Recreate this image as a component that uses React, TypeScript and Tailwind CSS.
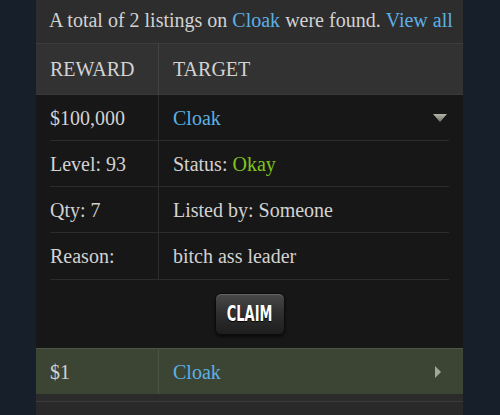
import React from "react";

const SERIF = "[font-family:'Liberation_Serif','Times_New_Roman',serif]";

function Row({ left, children, last }: { left: string; children: React.ReactNode; last?: boolean }) {
  return (
    <div className={`grid grid-cols-[108px_1fr] h-[46px] ${last ? "" : "border-b border-[#2c2c2c]"}`}>
      <div className="flex items-center">{left}</div>
      <div className="flex items-center pl-[14px] border-l border-[#2c2c2c]">{children}</div>
    </div>
  );
}

export default function App() {
  return (
    <div className={`w-[500px] h-[415px] flex bg-[#17202a] overflow-hidden text-[20px] text-[#d2d2d2] ${SERIF}`}>
      <div className="w-[36px] shrink-0" />

      <div className="w-[427px] shrink-0 flex flex-col bg-[#171717]">
        {/* summary line */}
        <div className="h-[44px] bg-[#2d2d2d] flex items-center px-[13px] pb-[4px] border-b border-[#3d3d3d] whitespace-nowrap">
          A total of 2 listings on&nbsp;<span className="text-[#5cb0e4]">Cloak</span>&nbsp;were found.&nbsp;
          <span className="text-[#5cb0e4]">View all</span>
        </div>

        {/* column headings */}
        <div className="h-[51px] bg-[#323232] px-[14px] grid grid-cols-[108px_1fr] border-b border-[#3a3a3a]">
          <div className="flex items-center">REWARD</div>
          <div className="flex items-center pl-[14px] border-l border-[#434343]">TARGET</div>
        </div>

        {/* listing details */}
        <div className="px-[14px]">
          <div className="border-b border-[#2c2c2c]">
            <Row left="$100,000">
              <span className="text-[#5cb0e4]">Cloak</span>
              <svg className="ml-auto mr-[2px]" width="14" height="8" viewBox="0 0 14 8">
                <defs>
                  <linearGradient id="dn" x1="0" y1="0" x2="0" y2="1">
                    <stop offset="0" stopColor="#b4b6a8" />
                    <stop offset="1" stopColor="#6f7166" />
                  </linearGradient>
                </defs>
                <polygon points="0,0 14,0 7,8" fill="url(#dn)" />
              </svg>
            </Row>
            <Row left="Level: 93">
              Status:&nbsp;<span className="text-[#80c41d]">Okay</span>
            </Row>
            <Row left="Qty: 7">Listed by: Someone</Row>
            <Row left="Reason:" last>
              bitch ass leader
            </Row>
          </div>
        </div>

        {/* claim */}
        <div className="h-[68px] flex items-center justify-center">
          <button className="w-[70px] h-[42px] flex items-center justify-center rounded-[6px] bg-gradient-to-b from-[#4a4a4a] via-[#2e2e2e] to-[#1e1e1e] border border-[#0c0c0c] shadow-[0_2px_3px_rgba(0,0,0,0.6),inset_0_1px_0_rgba(255,255,255,0.15)] text-white [text-shadow:0_1px_1px_#000]">
            <span className="inline-block text-[20px] font-bold scale-x-[0.72] scale-y-[1.05] [font-family:'DejaVu_Sans_Condensed','DejaVu_Sans',sans-serif]">CLAIM</span>
          </button>
        </div>

        {/* second listing */}
        <div className="h-[46px] bg-[#3c4434] border-t border-[#4d5545] px-[14px] grid grid-cols-[108px_1fr]">
          <div className="flex items-center">$1</div>
          <div className="flex items-center pl-[14px] border-l border-[#4b5343]">
            <span className="text-[#5cb0e4]">Cloak</span>
            <svg className="ml-auto mr-[8px]" width="6" height="12" viewBox="0 0 6 12">
              <polygon points="0,0 6,6 0,12" fill="#a3a596" />
            </svg>
          </div>
        </div>

        <div className="h-[8px] bg-[#2b2b2b] border-b border-[#3c3c3c]" />
        <div className="flex-1 bg-[#292929]" />
      </div>

      <div className="flex-1" />
    </div>
  );
}
